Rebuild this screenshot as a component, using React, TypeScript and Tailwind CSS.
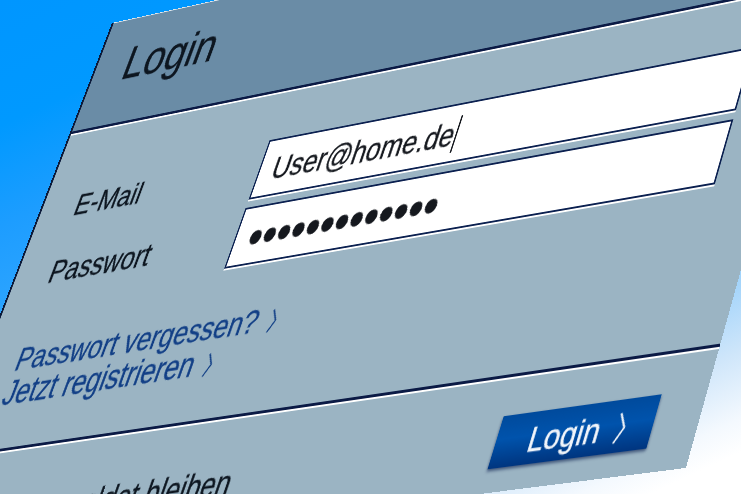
const W = 990;
const H = 600;
// Perspective of the tilted login panel, from its four corners on the page.
function quadToMatrix(p: number[][]) {
  const [[x0, y0], [x1, y1], [x2, y2], [x3, y3]] = p;
  const dx1 = x1 - x2, dx2 = x3 - x2, sx = x0 - x1 + x2 - x3;
  const dy1 = y1 - y2, dy2 = y3 - y2, sy = y0 - y1 + y2 - y3;
  const det = dx1 * dy2 - dx2 * dy1;
  const g = (sx * dy2 - dx2 * sy) / det;
  const h = (dx1 * sy - sx * dy1) / det;
  const a = x1 - x0 + g * x1, b = x3 - x0 + h * x3;
  const d = y1 - y0 + g * y1, e = y3 - y0 + h * y3;
  return `matrix3d(${a / W},${d / W},0,${g / W},${b / H},${e / H},0,${h / H},0,0,1,0,${x0},${y0},0,1)`;
}
const tilt = quadToMatrix([[112, 23], [855, -140.5], [686, 468], [-97, 567]]);

function Chevron({ className }: { className: string }) {
  return (
    <svg viewBox="0 0 12 32" className={className} fill="none" stroke="currentColor" strokeWidth="2.2">
      <path d="M2 2 L10 16 L2 30" />
    </svg>
  );
}

function Field({ children }: { children: React.ReactNode }) {
  return (
    <div className="flex h-[65px] w-[616px] items-center border-2 border-[#0b2050] bg-white pl-[18px] pt-[3px] text-[34.3px] text-[#15181e] shadow-[0_2px_0_#ffffff]">
      {children}
    </div>
  );
}

export default function App() {
  return (
    <div className="h-[494px] w-[741px] overflow-hidden bg-[linear-gradient(155deg,#0096ff_0%,#0099ff_15%,#1d9dff_27%,#2aa3ff_36%,#a5d5fb_75%,#cfe6fa_83%,#f4f9fe_91%,#ffffff_95%)] font-['Liberation_Sans',sans-serif]">
      <div
        className="flex h-[600px] w-[990px] origin-top-left flex-col border-l-[3px] border-l-[#0b1a3a] bg-[#9bb4c3] text-[35px] leading-[37px] text-[#0d1620] [-webkit-text-stroke:0.35px_currentColor]"
        style={{ transform: tilt }}
      >
        <header className="flex h-[131px] shrink-0 items-start border-t border-t-[#dfe8ee] border-b-[3px] border-b-[#0b1a45] bg-[#6a8ca6] pl-[44px] pt-[25px] text-[55px] leading-[60px] shadow-[0_2px_0_#ffffff]">
          Login
        </header>
        <main className="flex flex-1 flex-col pl-[51px] pt-[55px]">
          <div className="flex">
            <div className="flex w-[260px] flex-col">
              <label className="flex h-[65px] items-center pt-[2px] text-[34px]">E-Mail</label>
              <div className="h-[9px]" />
              <label className="flex h-[65px] items-center pt-[2px]">Passwort</label>
            </div>
            <div className="flex flex-col gap-[9px]">
              <Field>
                <span>User@home.de</span>
                <span className="ml-[1px] h-[40px] w-[2px] bg-[#15181e]" />
              </Field>
              <Field>
                <span className="pt-[2px] text-[55px] leading-[37px]">•••••••••••••</span>
              </Field>
            </div>
          </div>
          <nav className="mt-[45px] flex flex-col text-[#123f86]">
            <a className="flex items-center gap-[15px] text-[35px]">
              Passwort vergessen?
              <Chevron className="mt-[6px] h-[27px] w-[11px]" />
            </a>
            <a className="flex items-center gap-[15px] text-[36px]">
              Jetzt registrieren
              <Chevron className="mt-[6px] h-[27px] w-[11px]" />
            </a>
          </nav>
        </main>
        <footer className="flex h-[114px] shrink-0 items-start justify-between border-t-[3px] border-t-[#0b1a45] pl-[116px] pr-[52px] pt-[38px] shadow-[inset_0_2px_0_#ffffff]">
          <span className="pt-[10px]">Angemeldet bleiben</span>
          <button className="flex h-[50px] w-[183px] items-center justify-center gap-[17px] bg-[linear-gradient(#004a9c,#0053ac_45%,#00357f)] pl-[8px] pt-[3px] text-[34px] text-[#f2f6fb] shadow-[0_2px_3px_rgba(0,20,70,0.6)]">
            Login
            <Chevron className="h-[32px] w-[12px]" />
          </button>
        </footer>
      </div>
    </div>
  );
}
